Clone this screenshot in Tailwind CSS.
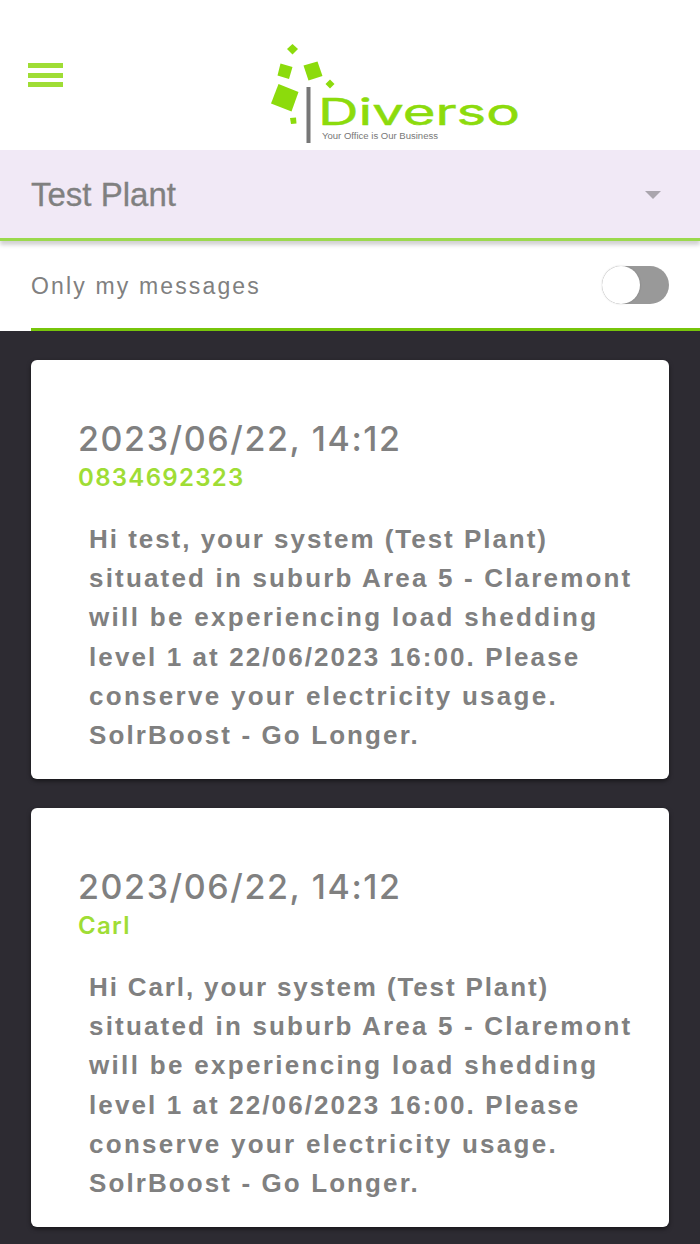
<!DOCTYPE html>
<html lang="en">
<head>
  <meta charset="UTF-8" />
  <meta name="viewport" content="width=device-width, initial-scale=1.0"/>
  <title>Diverso - Messages</title>
  <script src="https://cdn.jsdelivr.net/npm/@tailwindcss/browser@4"></script>
</head>
<body class="bg-[#2d2b32] font-['Liberation_Sans',sans-serif] text-[#808080]">

  <div class="w-[700px] h-[1244px] overflow-hidden flex flex-col">
    <header class="h-[150px] shrink-0 bg-white flex items-start">
      <button class="ml-7 mt-[63px] flex flex-col gap-[4.5px]" aria-label="Menu">
        <span class="block w-[35px] h-[5px] bg-[#9fdd35]"></span>
        <span class="block w-[35px] h-[5px] bg-[#9fdd35]"></span>
        <span class="block w-[35px] h-[5px] bg-[#9fdd35]"></span>
      </button>
      <svg class="ml-[197px] mt-[30px]" width="270" height="120" viewBox="0 0 270 120">
        <g fill="#8cdb0c">
          <path d="M32.5 14L38 19L32.5 24.5L27 19Z"/>
          <path d="M20.5 33.5L32.5 37L29 49L17.5 45.5Z"/>
          <path d="M43.5 35.5L57.5 31.5L62.5 46L48.5 50.5Z"/>
          <path d="M70 49.5L74.5 54L70 58.5L65.5 54Z"/>
          <path d="M18.5 54L38.5 62L31.5 81.5L11 73.5Z"/>
          <path d="M30 88L36 87.5L36.5 93.5L31 94Z"/>
        </g>
        <rect x="46.5" y="57" width="4" height="56" fill="#777"/>
        <text x="58" y="95" font-family="Inter, sans-serif" font-size="36.5" fill="#8cdb0c" stroke="#8cdb0c" stroke-width="0.5" textLength="202" lengthAdjust="spacingAndGlyphs">Diverso</text>
        <text x="62" y="109" font-family="Liberation Sans, sans-serif" font-size="8.5" fill="#777" textLength="116" lengthAdjust="spacingAndGlyphs">Your Office is Our Business</text>
      </svg>
    </header>

    <div class="relative z-10 h-[91px] shrink-0 bg-[#f1e9f6] border-b-[3px] border-[#9bd94d] shadow-[0_4px_4px_rgba(0,0,0,0.18)] flex items-center justify-between pl-[31px] pr-[39px]">
      <span class="text-[33px] pt-[2px] [-webkit-text-stroke:0.3px_#808080]">Test Plant</span>
      <svg width="16" height="8" viewBox="0 0 16 8" class="mt-[2px]"><path d="M0 0H16L8 8Z" fill="#aaa5ad"/></svg>
    </div>

    <div class="h-[90px] shrink-0 bg-white pl-[31px]">
      <div class="h-full border-b-[3px] border-[#77c50b] flex items-center justify-between pr-[31px]">
        <span class="text-[23px] tracking-[2.15px] pt-[4px]">Only my messages</span>
        <span class="relative w-[67px] h-[38px] rounded-full bg-[#999]">
          <span class="absolute left-0 top-0 size-[38px] rounded-full bg-white shadow-[0_0_2px_rgba(0,0,0,0.2)]"></span>
        </span>
      </div>
    </div>

    <main class="px-[31px] pt-[29px] flex flex-col gap-[29px]">
      <article class="h-[419px] shrink-0 bg-white rounded-[6px] shadow-[0_2px_4px_rgba(0,0,0,0.5)] pl-12 pt-[59px]">
        <h2 class="-ml-px font-[Inter] font-medium text-[34px] leading-[40px] tracking-[1.6px] whitespace-nowrap">2023/06/22, 14:12</h2>
        <p class="-ml-px mt-px font-[Inter] font-semibold text-[24px] leading-[36px] tracking-[1.3px] text-[#9fdd35]">0834692323</p>
        <div class="mt-[24px] ml-[10px] font-bold text-[26px] leading-[39.2px] whitespace-nowrap">
          <p class="tracking-[1.97px]">Hi test, your system (Test Plant)</p>
          <p class="tracking-[2.18px]">situated in suburb Area 5 - Claremont</p>
          <p class="tracking-[2.32px]">will be experiencing load shedding</p>
          <p class="tracking-[2.1px]">level 1 at 22/06/2023 16:00. Please</p>
          <p class="tracking-[2.28px]">conserve your electricity usage.</p>
          <p class="tracking-[2.1px]">SolrBoost - Go Longer.</p>
        </div>
      </article>

      <article class="h-[419px] shrink-0 bg-white rounded-[6px] shadow-[0_2px_4px_rgba(0,0,0,0.5)] pl-12 pt-[59px]">
        <h2 class="-ml-px font-[Inter] font-medium text-[34px] leading-[40px] tracking-[1.6px] whitespace-nowrap">2023/06/22, 14:12</h2>
        <p class="-ml-px mt-px font-[Inter] font-semibold text-[24px] leading-[36px] tracking-[1.3px] text-[#9fdd35]">Carl</p>
        <div class="mt-[24px] ml-[10px] font-bold text-[26px] leading-[39.2px] whitespace-nowrap">
          <p class="tracking-[1.87px]">Hi Carl, your system (Test Plant)</p>
          <p class="tracking-[2.18px]">situated in suburb Area 5 - Claremont</p>
          <p class="tracking-[2.32px]">will be experiencing load shedding</p>
          <p class="tracking-[2.1px]">level 1 at 22/06/2023 16:00. Please</p>
          <p class="tracking-[2.28px]">conserve your electricity usage.</p>
          <p class="tracking-[2.1px]">SolrBoost - Go Longer.</p>
        </div>
      </article>
    </main>
  </div>

</body>
</html>
